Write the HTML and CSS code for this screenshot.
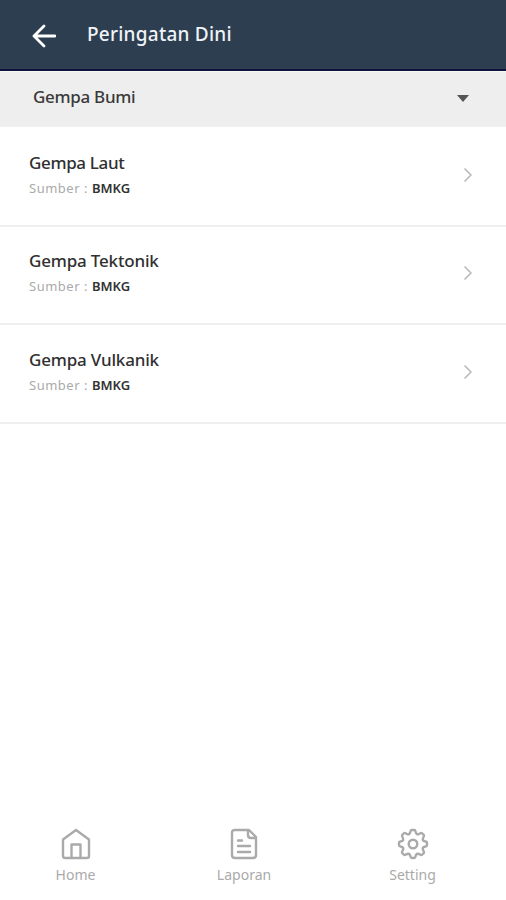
FILE: index.html
```html
<!DOCTYPE html>
<html lang="id">
<head>
<meta charset="utf-8">
<title>Peringatan Dini</title>
<link rel="stylesheet" href="styles.css">
</head>
<body>
<header class="header">
  <svg class="back" width="24" height="24" viewBox="0 0 24 24"><path d="M12 2 2 12l10 10M2 12h21"/></svg>
  <h1 class="title">Peringatan Dini</h1>
</header>
<div class="select"><span class="select-label">Gempa Bumi</span><svg class="caret" width="12" height="8" viewBox="0 0 12 8"><path d="M0 0h12L6 7z"/></svg></div>
<main class="list">
  <div class="row"><div><h2 class="name laut">Gempa Laut</h2><p class="source"><span class="key">Sumber :</span><b class="agency">BMKG</b></p></div><svg class="chevron" width="10" height="16" viewBox="0 0 10 16"><path d="m2 2 6 6-6 6"/></svg></div>
  <div class="row"><div><h2 class="name">Gempa Tektonik</h2><p class="source"><span class="key">Sumber :</span><b class="agency">BMKG</b></p></div><svg class="chevron" width="10" height="16" viewBox="0 0 10 16"><path d="m2 2 6 6-6 6"/></svg></div>
  <div class="row"><div><h2 class="name">Gempa Vulkanik</h2><p class="source"><span class="key">Sumber :</span><b class="agency">BMKG</b></p></div><svg class="chevron" width="10" height="16" viewBox="0 0 10 16"><path d="m2 2 6 6-6 6"/></svg></div>
</main>
<nav class="nav">
  <a class="tab"><svg width="32" height="32" viewBox="0 0 32 32"><path d="M3 11.500 16 2l13 9.500V28q0 2-2 2H5q-2 0-2-2zM11.500 30V16.500h9V30"/></svg><span>Home</span></a>
  <a class="tab"><svg width="32" height="32" viewBox="0 0 32 32"><path d="M7 2h14l7 7v18q0 3-3 3H7q-3 0-3-3V5q0-3 3-3zM20 2v5q0 3 3 3h5M10 12.500h4M10 18h12M10 24h12"/></svg><span>Laporan</span></a>
  <a class="tab"><svg width="32" height="32" viewBox="-16 -16 32 32"><defs><path id="tooth" d="M-4.100-9.900C-3-10.400-2.800-11-2.500-12.500Q-2.200-14-1.200-14H1.200Q2.200-14 2.500-12.500C2.800-11 3-10.400 4.100-9.900"/></defs><use href="#tooth"/><use href="#tooth" transform="rotate(45)"/><use href="#tooth" transform="rotate(90)"/><use href="#tooth" transform="rotate(135)"/><use href="#tooth" transform="rotate(180)"/><use href="#tooth" transform="rotate(225)"/><use href="#tooth" transform="rotate(270)"/><use href="#tooth" transform="rotate(315)"/><circle r="4.300"/></svg><span>Setting</span></a>
</nav>
</body>
</html>
```
FILE: styles.css
```css
* { box-sizing: border-box; }
body { margin: 0; height: 900px; display: flex; flex-direction: column; background: #fff; font-family: "Noto Sans", sans-serif; }
h1, h2, p { margin: 0; }
svg { fill: none; flex: none; stroke-linecap: round; stroke-linejoin: round; }
.header { height: 71px; background: #2c3e50; border-bottom: 2px solid #10123e; display: flex; align-items: center; gap: 31px; padding-left: 32px; }
.back { stroke: #fff; stroke-width: 2.8; margin-top: 2px; }
.title { font-size: 19px; line-height: 26px; margin-bottom: 2px; font-weight: 500; color: #f0f3f8; letter-spacing: .24px; }
.select { height: 56px; background: #eee; border-top: 1px solid #f8f8f8; display: flex; align-items: center; justify-content: space-between; padding: 0 37px 4px 33px; }
.select-label { font-size: 17px; line-height: 24px; margin-bottom: 2px; font-weight: 500; color: #3a3a3a; letter-spacing: -.3px; }
.caret { fill: #555; margin-top: 3px; }
.list { flex: 1; }
.row { height: 98px; border-bottom: 2px solid #efefef; display: flex; justify-content: space-between; align-items: flex-start; padding: 21px 33px 0 29px; }
.row:first-child { height: 100px; padding-top: 23px; }
.row:last-child { height: 99px; padding-top: 22px; }
.name { font-size: 17px; line-height: 25px; font-weight: 500; color: #303030; letter-spacing: -.18px; }
.laut { letter-spacing: -.35px; }
.source { display: flex; gap: 4px; margin-top: 1px; font-size: 13px; line-height: 25px; }
.key { color: #aaa; letter-spacing: .5px; }
.agency { color: #333; font-weight: 600; }
.chevron { stroke: #bbb; stroke-width: 1.7; margin-top: 17px; }
.nav { height: 74px; display: flex; gap: 36.5px; padding-left: 9.5px; }
.tab { width: 132px; display: flex; flex-direction: column; align-items: center; gap: 4px; color: #aaa; font-size: 14px; line-height: 22px; padding-top: 2px; }
.tab svg { stroke: #aaa; stroke-width: 2.4; }
```
